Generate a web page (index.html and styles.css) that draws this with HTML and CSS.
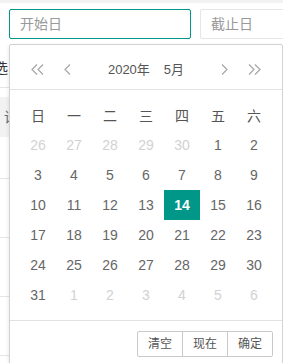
FILE: index.html
```html
<!DOCTYPE html>
<html lang="zh">
<head>
<meta charset="utf-8">
<link rel="stylesheet" href="styles.css">
</head>
<body>
<div class="strip"></div>
<div class="range">
  <div class="inp inp-start active">开始日</div>
  <div class="inp inp-end">截止日</div>
</div>
<div class="bgform">
  <div class="bglabel">筛选</div>
  <div class="bghead">请</div>
  <div class="bgrow first"></div>
  <div class="bgrow"></div>
  <div class="bgrow"></div>
  <div class="bgrow"></div>
</div>

<div class="laydate">
  <div class="ld-header">
    <span class="ld-ico"><svg width="13" height="11" viewBox="0 0 13 11"><polyline points="6,0.5 1,5.5 6,10.5" /><polyline points="12,0.5 7,5.5 12,10.5" /></svg></span>
    <span class="ld-ico gap"><svg width="7" height="11" viewBox="0 0 7 11"><polyline points="6,0.5 1,5.5 6,10.5" /></svg></span>
    <div class="ld-title"><span class="yr">2020年</span><span class="mo">5月</span></div>
    <span class="ld-ico"><svg width="7" height="11" viewBox="0 0 7 11"><polyline points="1,0.5 6,5.5 1,10.5" /></svg></span>
    <span class="ld-ico gap"><svg width="13" height="11" viewBox="0 0 13 11"><polyline points="1,0.5 6,5.5 1,10.5" /><polyline points="7,0.5 12,5.5 7,10.5" /></svg></span>
  </div>
  <div class="ld-content">
    <div class="wk">日</div><div class="wk">一</div><div class="wk">二</div><div class="wk">三</div><div class="wk">四</div><div class="wk">五</div><div class="wk">六</div>
    <div class="d other">26</div><div class="d other">27</div><div class="d other">28</div><div class="d other">29</div><div class="d other">30</div><div class="d">1</div><div class="d">2</div>
    <div class="d">3</div><div class="d">4</div><div class="d">5</div><div class="d">6</div><div class="d">7</div><div class="d">8</div><div class="d">9</div>
    <div class="d">10</div><div class="d">11</div><div class="d">12</div><div class="d">13</div><div class="d this">14</div><div class="d">15</div><div class="d">16</div>
    <div class="d">17</div><div class="d">18</div><div class="d">19</div><div class="d">20</div><div class="d">21</div><div class="d">22</div><div class="d">23</div>
    <div class="d">24</div><div class="d">25</div><div class="d">26</div><div class="d">27</div><div class="d">28</div><div class="d">29</div><div class="d">30</div>
    <div class="d">31</div><div class="d other">1</div><div class="d other">2</div><div class="d other">3</div><div class="d other">4</div><div class="d other">5</div><div class="d other">6</div>
  </div>
  <div class="ld-footer">
    <div class="btns"><span class="btn">清空</span><span class="btn">现在</span><span class="btn">确定</span></div>
  </div>
</div>
</body>
</html>
```
FILE: styles.css
```css
html, body {
  margin: 0;
  padding: 0;
}
body {
  position: relative;
  width: 283px;
  height: 363px;
  overflow: hidden;
  background: #fff;
  font-family: "Liberation Sans", "Noto Sans CJK SC", sans-serif;
  font-size: 14px;
  color: #666;
}
.strip {
  height: 3px;
  background: #f2f2f2;
}
.range {
  display: flex;
  gap: 9px;
  padding: 6px 0 0 9px;
}
.inp {
  flex: none;
  box-sizing: border-box;
  height: 30px;
  border: 1px solid #e6e6e6;
  border-radius: 2px;
  padding-left: 10px;
  line-height: 28px;
  font-size: 14px;
  color: #999;
}
.inp-start { width: 182px; }
.inp-end { width: 120px; }
.inp.active { border-color: #009688; }

.bgform {
  margin-left: -20px;
  width: 300px;
}
.bglabel {
  box-sizing: border-box;
  height: 49px;
  padding-top: 19px;
  line-height: 20px;
  color: #333;
  border-bottom: 1px solid #e6e6e6;
}
.bghead {
  margin-top: 9px;
  height: 40px;
  line-height: 40px;
  padding-left: 24px;
  background: #f2f2f2;
  color: #666;
}
.bgrow {
  height: 58px;
  border-bottom: 1px solid #e6e6e6;
}
.bgrow.first { height: 41px; }

.laydate {
  position: absolute;
  left: 9px;
  top: 44px;
  width: 272px;
  background: #fff;
  border: 1px solid #d2d2d2;
  border-radius: 2px;
  box-shadow: 0 2px 4px rgba(0, 0, 0, 0.12);
}
.ld-header {
  display: flex;
  align-items: center;
  height: 45px;
  box-sizing: border-box;
  padding: 10px 15px 5px;
  border-bottom: 1px solid #e2e2e2;
}
.ld-ico {
  flex: none;
  width: 25px;
  height: 30px;
  display: flex;
  align-items: center;
  justify-content: center;
}
.ld-ico.gap:nth-child(2) { margin-left: 5px; }
.ld-ico.gap:last-child { margin-left: 5px; }
.ld-ico svg polyline {
  fill: none;
  stroke: #a6a6a6;
  stroke-width: 1.2;
}
.ld-title {
  flex: 1;
  text-align: center;
  line-height: 30px;
  font-size: 13px;
  color: #555;
}
.ld-title .yr { margin-right: 14px; }

.ld-content {
  display: grid;
  grid-template-columns: repeat(7, 36px);
  grid-auto-rows: 30px;
  padding: 10px;
}
.wk, .d {
  display: flex;
  align-items: center;
  justify-content: center;
  font-size: 14px;
}
.wk { color: #555; }
.d { color: #666; }
.d.other { color: #d2d2d2; }
.d.this {
  background: #009688;
  color: #fff;
  font-weight: 700;
}

.ld-footer {
  height: 46px;
  box-sizing: border-box;
  padding: 10px 9px 10px 15px;
  border-top: 1px solid #e2e2e2;
  display: flex;
  justify-content: flex-end;
}
.btns {
  display: flex;
}
.btn {
  box-sizing: border-box;
  height: 26px;
  line-height: 24px;
  padding: 0 10px;
  border: 1px solid #c9c9c9;
  margin-left: -1px;
  font-size: 12px;
  color: #555;
  background: #fff;
}
.btn:first-child { border-radius: 2px 0 0 2px; }
.btn:last-child { border-radius: 0 2px 2px 0; }
```
